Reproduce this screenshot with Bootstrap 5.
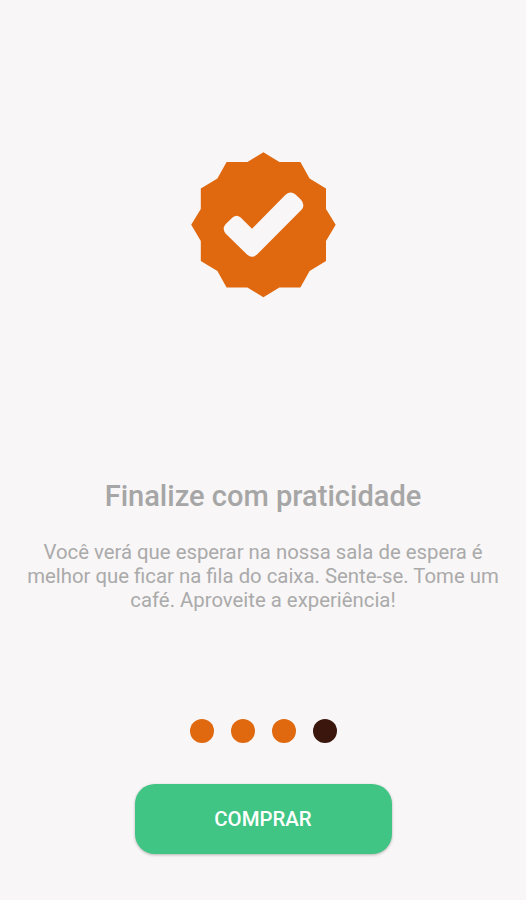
<!DOCTYPE html>
<html lang="pt-BR">
<head>
<meta charset="utf-8">
<meta name="viewport" content="width=device-width, initial-scale=1">
<title>Finalize com praticidade</title>
<link href="https://cdn.jsdelivr.net/npm/bootstrap@5.3.0/dist/css/bootstrap.min.css" rel="stylesheet">
<style>
  body { background: #f8f6f7; font-family: Roboto, "Liberation Sans", sans-serif; color: #a8a8a8; }
  .screen { height: 900px; padding-top: 152px; }
  .seal { width: 145px; height: 146px; }
  .headline { font-size: 29.05px; line-height: 34px; font-weight: 500; margin-top: 181px; color: #a6a6a6; }
  .copy { font-size: 20.33px; line-height: 24px; margin-top: 27px; white-space: nowrap; color: #aaa; }
  .steps { gap: 17px; margin-top: 107px; }
  .step { width: 24px; height: 24px; background: #e06910; }
  .step.current { background: #3b160c; }
  .buy { --bs-btn-color: #fff; --bs-btn-bg: #40c585; --bs-btn-hover-color: #fff; --bs-btn-hover-bg: #38b578; --bs-btn-border-width: 0;
    width: 257px; height: 70px; margin-top: 41px; border-radius: 20px; font-size: 20.4px; font-weight: 500; box-shadow: 0 1px 3px rgba(0,0,0,.28); }
</style>
</head>
<body>
<main class="screen d-flex flex-column align-items-center text-center overflow-hidden">
  <svg class="seal flex-shrink-0" viewBox="0 0 145 146" aria-hidden="true">
    <path fill="#e06910" d="M72.4 .3 88.4 10H109.4L118.6 26.6 135 36.6V57L144.7 72.8 135 89V109L118.6 119 109.4 135.4H88.4L72.4 145.3 56.4 135.4H35.6L26.4 119 9.8 109V89L.2 72.8 9.8 57V36.6L26.4 26.6 35.6 10H56.4Z"/>
    <path fill="#f8f6f7" d="M34.500 72.300 41.500 65.600Q45.400 62 49.400 65.200L61 76.700 94.500 42.800Q99.500 38.400 104.500 42.500L110 47.800Q114.500 53 110.500 57.800L66 102.600Q61 107 56 102.600L34.300 81.200Q31 76.700 34.500 72.300Z"/>
  </svg>
  <h1 class="headline mb-0">Finalize com praticidade</h1>
  <p class="copy mb-0">Você verá que esperar na nossa sala de espera é<br>melhor que ficar na fila do caixa. Sente-se. Tome um<br>café. Aproveite a experiência!</p>
  <div class="steps d-flex">
    <span class="step rounded-circle"></span>
    <span class="step rounded-circle"></span>
    <span class="step rounded-circle"></span>
    <span class="step current rounded-circle"></span>
  </div>
  <button type="button" class="buy btn">COMPRAR</button>
</main>
<script src="https://cdn.jsdelivr.net/npm/bootstrap@5.3.0/dist/js/bootstrap.bundle.min.js"></script>
</body>
</html>
